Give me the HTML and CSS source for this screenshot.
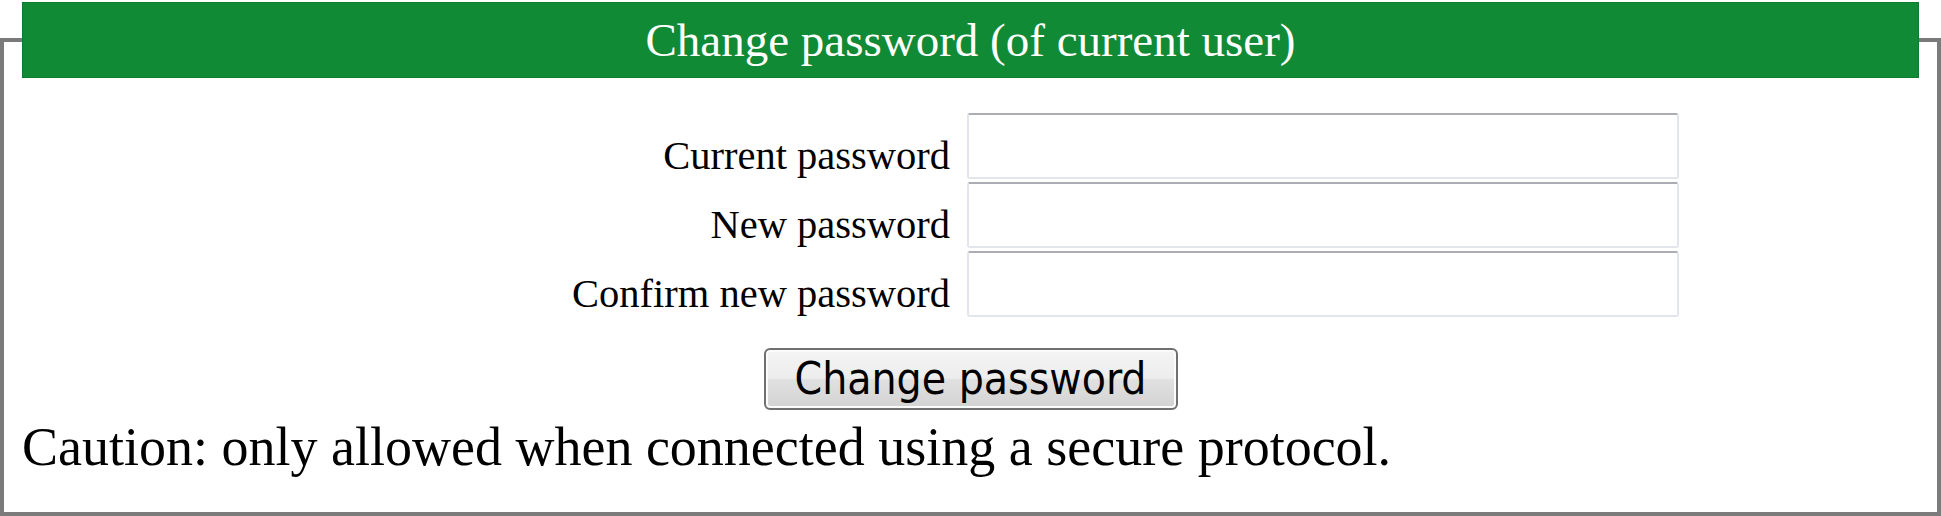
FILE: index.html
```html
<!DOCTYPE html>
<html lang="en">
<head>
    <meta charset="UTF-8">
    <meta name="viewport" content="width=device-width, initial-scale=1.0">
    <title>Change password</title>
    <link rel="stylesheet" href="styles.css">
</head>
<body>
    <form class="pw-box">
        <fieldset>
            <legend>Change password (of current user)</legend>

            <div class="pw-form">
                <label for="current-pw">Current password</label>
                <input type="password" id="current-pw">

                <label for="new-pw">New password</label>
                <input type="password" id="new-pw">

                <label for="confirm-pw">Confirm new password</label>
                <input type="password" id="confirm-pw">
            </div>

            <div class="actions">
                <button type="button" id="change-pw">Change password</button>
            </div>

            <p class="caution">Caution: only allowed when connected using a secure protocol.</p>
        </fieldset>
    </form>
</body>
</html>
```

FILE: styles.css
```css
body {
    margin: 0;
    background: #fff;
    font-family: 'Liberation Serif', 'Times New Roman', serif;
    color: #000;
    overflow: hidden;
}

.pw-box {
    margin: 0;
}

/* Fieldset frame with the green title bar */
fieldset {
    margin: 2px 0 0;
    padding: 35px 18px 34px;
    border: 4px solid #7b7b7b;
    min-width: 0;
}

legend {
    box-sizing: border-box;
    width: 100%;
    height: 76px;
    padding: 0;
    background-color: #118a36;
    border: 1px solid #0d7a2e;
    color: #fff;
    font-size: 47px;
    line-height: 74px;
    text-align: center;
}

/* Label / input rows */
.pw-form {
    display: grid;
    grid-template-columns: 1fr 712px;
    column-gap: 17px;
    row-gap: 3px;
    margin-right: 240px;
}

.pw-form label {
    align-self: end;
    text-align: right;
    font-size: 40.5px;
    line-height: 46px;
    padding-bottom: 0;
}

.pw-form input {
    box-sizing: border-box;
    height: 66px;
    margin: 0;
    padding: 0 8px;
    border: 2px solid #e2e6ec;
    border-top-color: #abadb3;
    border-radius: 3px;
    background: #fff;
    font-size: 36px;
}

/* Submit button */
.actions {
    display: flex;
    justify-content: center;
    margin-top: 31px;
}

button {
    box-sizing: border-box;
    width: 414px;
    height: 62px;
    margin: 0;
    padding: 0;
    border: 2px solid #707070;
    border-radius: 6px;
    background: linear-gradient(to bottom, #f4f4f4 0%, #ededed 48%, #e0e0e0 52%, #d3d3d3 100%);
    box-shadow: inset 0 0 0 2px #fbfbfb;
    color: #000;
    font-family: 'DejaVu Sans Condensed', 'DejaVu Sans', sans-serif;
    font-size: 44px;
    line-height: 56px;
    cursor: pointer;
}

.caution {
    margin: 6px 0 0;
    font-size: 54px;
    line-height: 62px;
}
```
